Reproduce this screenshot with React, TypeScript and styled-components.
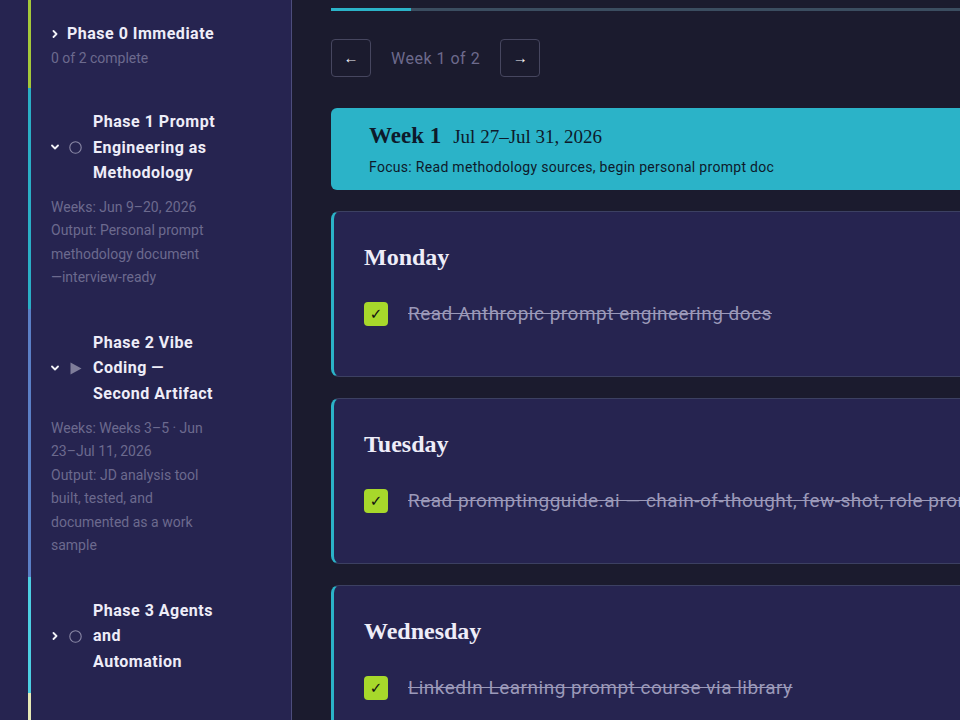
import React from 'react';
import styled, { createGlobalStyle } from 'styled-components';

const GlobalStyle = createGlobalStyle`
  html, body {
    margin: 0;
    padding: 0;
    background: #1b1b2e;
    overflow: hidden;
  }
  * { box-sizing: border-box; }
`;

const SApp = styled.div`
  display: flex;
  height: 720px;
  width: 960px;
  overflow: hidden;
  font-family: Roboto, 'Noto Sans', sans-serif;
`;

const SSidebar = styled.aside`
  flex: none;
  width: 292px;
  background: #262450;
  border-right: 1px solid #4d4d7c;
  padding: 0 0 0 28px;
  display: flex;
  flex-direction: column;
`;

const SPhase = styled.div<{ $color: string }>`
  border-left: 3px solid ${({ $color }) => $color};
  padding: 21px 34px 19px 20px;

  &:first-child {
    padding-bottom: 18px;
  }
`;

const SPhaseHead = styled.div<{ $bare?: boolean }>`
  display: flex;
  align-items: center;
  gap: ${({ $bare }) => ($bare ? '8px' : '10px')};
`;

const SChevron = styled.svg`
  flex: none;
  width: 8px;
  height: 8px;
`;

const SStatus = styled.svg`
  flex: none;
  width: 13px;
  height: 13px;
  margin-right: 1px;
`;

const SPhaseTitle = styled.div`
  font-size: 16px;
  font-weight: 700;
  letter-spacing: 0.5px;
  line-height: 25.6px;
  color: #eeedf8;
  white-space: nowrap;
`;

const STitleLine = styled.span`
  display: block;
`;

const SPhaseMeta = styled.div<{ $tight?: boolean }>`
  margin-top: ${({ $tight }) => ($tight ? '0' : '10px')};
  font-size: 14px;
  line-height: 23.5px;
  color: #6c6a8e;
  max-width: 155px;
`;

const SMain = styled.main`
  flex: none;
  width: 1100px;
  padding: 8px 40px 0 39px;
  display: flex;
  flex-direction: column;
`;

const SProgress = styled.div`
  height: 3px;
  background: #3b4d60;
  flex: none;
`;

const SProgressFill = styled.div`
  height: 100%;
  background: #2bb3c8;
`;

const SNav = styled.div`
  display: flex;
  align-items: center;
  gap: 20px;
  margin-top: 28px;
`;

const SNavBtn = styled.button`
  width: 40px;
  height: 38px;
  border: 1px solid #46465f;
  border-radius: 4px;
  background: transparent;
  color: #f2f2f8;
  font-size: 15px;
  font-family: inherit;
  display: flex;
  align-items: center;
  justify-content: center;
  padding: 0;
  cursor: pointer;
`;

const SNavLabel = styled.span`
  font-size: 16px;
  letter-spacing: 0.5px;
  color: #6d6a8c;
`;

const SWeekHeader = styled.section`
  margin-top: 31px;
  background: #2bb3c8;
  border-radius: 6px;
  padding: 14px 38px 13px;
  color: #0e1a2b;
`;

const SWeekTitle = styled.h2`
  margin: 0 0 6px;
  font-family: 'Liberation Serif', 'Times New Roman', serif;
  display: flex;
  align-items: baseline;
  gap: 12px;
  line-height: 28px;
`;

const SWeekName = styled.span`
  font-size: 23px;
  font-weight: 700;
`;

const SWeekDates = styled.span`
  font-size: 19px;
  font-weight: 400;
`;

const SFocus = styled.p`
  margin: 0;
  font-size: 14px;
  letter-spacing: 0.3px;
  line-height: 20px;
`;

const SDays = styled.div`
  display: flex;
  flex-direction: column;
  gap: 21px;
  margin-top: 21px;
`;

const SDayCard = styled.section`
  background: #262450;
  border: 1px solid #3c4062;
  border-left: 3px solid #2bb3c8;
  border-radius: 8px;
  padding: 32px 30px 36px;
`;

const SDayTitle = styled.h3`
  margin: 0 0 18px;
  font-family: 'Liberation Serif', 'Times New Roman', serif;
  font-size: 24px;
  font-weight: 700;
  line-height: 26px;
  color: #eeedf8;
`;

const STask = styled.label`
  display: flex;
  align-items: center;
  gap: 20px;
  padding: 12px 0;
  line-height: 28px;
`;

const SCheck = styled.span<{ $done: boolean }>`
  flex: none;
  width: 24px;
  height: 24px;
  border-radius: 4px;
  background: ${({ $done }) => ($done ? '#a7d82b' : 'transparent')};
  border: ${({ $done }) => ($done ? 'none' : '1px solid #6c6a8e')};
  color: #111;
  font-size: 15px;
  display: flex;
  align-items: center;
  justify-content: center;
  font-family: 'DejaVu Sans', sans-serif;
`;

const STaskText = styled.span<{ $done: boolean }>`
  font-size: 19px;
  letter-spacing: 0.5px;
  white-space: nowrap;
  color: ${({ $done }) => ($done ? '#9b99b9' : '#eeedf8')};
  text-decoration: ${({ $done }) => ($done ? 'line-through' : 'none')};
`;

type Status = 'none' | 'todo' | 'active';

type Phase = {
  id: number;
  title: string[];
  color: string;
  open: boolean;
  status: Status;
  meta: string[];
};

// titles are kept as the lines the narrow sidebar shows them in
const phases: Phase[] = [
  { id: 0, title: ['Phase 0 Immediate'], color: '#a4c83a', open: false, status: 'none', meta: ['0 of 2 complete'] },
  {
    id: 1,
    title: ['Phase 1 Prompt', 'Engineering as', 'Methodology'],
    color: '#2aaec6',
    open: true,
    status: 'todo',
    meta: ['Weeks: Jun 9–20, 2026', 'Output: Personal prompt methodology document—interview-ready'],
  },
  {
    id: 2,
    title: ['Phase 2 Vibe', 'Coding —', 'Second Artifact'],
    color: '#5b7fc6',
    open: true,
    status: 'active',
    meta: ['Weeks: Weeks 3–5 · Jun 23–Jul 11, 2026', 'Output: JD analysis tool built, tested, and documented as a work sample'],
  },
  { id: 3, title: ['Phase 3 Agents', 'and', 'Automation'], color: '#4ccfe2', open: false, status: 'todo', meta: [] },
  { id: 4, title: ['Phase 4 Personal', 'Brand'], color: '#e6e9b6', open: false, status: 'todo', meta: [] },
];

const days = [
  { name: 'Monday', tasks: [{ text: 'Read Anthropic prompt engineering docs', done: true }] },
  { name: 'Tuesday', tasks: [{ text: 'Read promptingguide.ai — chain-of-thought, few-shot, role prompting', done: true }] },
  { name: 'Wednesday', tasks: [{ text: 'LinkedIn Learning prompt course via library', done: true }] },
];

function Chevron({ open }: { open: boolean }) {
  return (
    <SChevron viewBox='0 0 8 8'>
      {open ? (
        <path d='M1 2.5 L4 5.5 L7 2.5' fill='none' stroke='#f2f2f8' strokeWidth='1.8' strokeLinecap='round' strokeLinejoin='round' />
      ) : (
        <path d='M2.5 1 L5.5 4 L2.5 7' fill='none' stroke='#f2f2f8' strokeWidth='1.8' strokeLinecap='round' strokeLinejoin='round' />
      )}
    </SChevron>
  );
}

function StatusIcon({ status }: { status: Status }) {
  if (status === 'none') return null;
  return (
    <SStatus viewBox='0 0 13 13'>
      {status === 'active' ? (
        <path d='M1.5 0.5 L12.5 6.5 L1.5 12.5 Z' fill='#7f7d9a' />
      ) : (
        <circle cx='6.5' cy='6.5' r='5.7' fill='none' stroke='#8a88a6' strokeWidth='1.1' />
      )}
    </SStatus>
  );
}

export default function App() {
  const weekIndex = 0;
  const totalWeeks = 2;

  return (
    <>
      <GlobalStyle />
      <SApp>
        <SSidebar>
          {phases.map((p) => {
            const bare = p.status === 'none';
            return (
              <SPhase key={p.id} $color={p.color}>
                <SPhaseHead $bare={bare}>
                  <Chevron open={p.open} />
                  <StatusIcon status={p.status} />
                  <SPhaseTitle>
                    {p.title.map((line) => (
                      <STitleLine key={line}>{line}</STitleLine>
                    ))}
                  </SPhaseTitle>
                </SPhaseHead>
                {p.meta.length > 0 && (
                  <SPhaseMeta $tight={bare}>
                    {p.meta.map((m) => (
                      <div key={m}>{m}</div>
                    ))}
                  </SPhaseMeta>
                )}
              </SPhase>
            );
          })}
        </SSidebar>

        <SMain>
          <SProgress>
            <SProgressFill style={{ width: `${(80 / 1021) * 100}%` }} />
          </SProgress>

          <SNav>
            <SNavBtn>←</SNavBtn>
            <SNavLabel>
              Week {weekIndex + 1} of {totalWeeks}
            </SNavLabel>
            <SNavBtn>→</SNavBtn>
          </SNav>

          <SWeekHeader>
            <SWeekTitle>
              <SWeekName>Week 1</SWeekName>
              <SWeekDates>Jul 27–Jul 31, 2026</SWeekDates>
            </SWeekTitle>
            <SFocus>Focus: Read methodology sources, begin personal prompt doc</SFocus>
          </SWeekHeader>

          <SDays>
            {days.map((d) => (
              <SDayCard key={d.name}>
                <SDayTitle>{d.name}</SDayTitle>
                {d.tasks.map((t) => (
                  <STask key={t.text}>
                    <SCheck $done={t.done}>{t.done ? '✓' : ''}</SCheck>
                    <STaskText $done={t.done}>{t.text}</STaskText>
                  </STask>
                ))}
              </SDayCard>
            ))}
          </SDays>
        </SMain>
      </SApp>
    </>
  );
}
